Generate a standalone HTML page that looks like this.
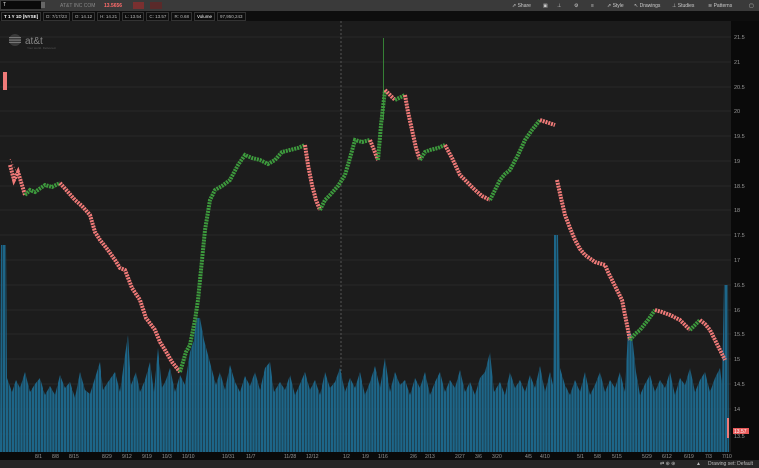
<!DOCTYPE html>
<html><head><meta charset="utf-8"><style>
html,body{margin:0;padding:0;background:#1c1c1c;width:759px;height:468px;overflow:hidden;font-family:"Liberation Sans",sans-serif}
#top{position:absolute;left:0;top:0;width:759px;height:11px;background:#3a3a3a;font-size:5px;color:#ccc}
#info{position:absolute;left:0;top:11px;width:759px;height:10px;background:#0e0e0e;font-size:4.5px;color:#bbb;display:flex;align-items:center;gap:2px;padding-left:1px;box-sizing:border-box}
.b{height:7px;line-height:7px;border:1px solid #333;padding:0 2px;white-space:nowrap}
.t{position:absolute;top:3px;white-space:nowrap;line-height:6px}
#axis{position:absolute;left:731px;top:21px;width:28px;height:439px;background:#0a0a0a}
#xaxis{position:absolute;left:0;top:452px;width:731px;height:8px;background:#0a0a0a}
#bot{position:absolute;left:0;top:460px;width:759px;height:8px;background:#262626;font-size:5px;color:#bbb}
svg{position:absolute;left:0;top:0}
</style></head><body>
<div id="top">
<div style="position:absolute;left:1px;top:1px;width:38px;height:8px;background:#0a0a0a;color:#ddd;font-size:5px;line-height:8px;padding-left:2px">T</div>
<div style="position:absolute;left:41px;top:2px;width:4px;height:6px;background:#666"></div>
<div class="t" style="left:60px;color:#888">AT&amp;T INC COM</div>
<div class="t" style="left:104px;color:#ff6b6b;font-weight:bold">13.5656</div>
<div style="position:absolute;left:133px;top:2px;width:11px;height:7px;background:#7a3030"></div>
<div style="position:absolute;left:150px;top:2px;width:12px;height:7px;background:#5a2a2a"></div>
<div class="t" style="left:512px">⇗ Share</div>
<div class="t" style="left:543px">▣</div>
<div class="t" style="left:557px">⊥</div>
<div class="t" style="left:574px">⚙</div>
<div class="t" style="left:591px">≡</div>
<div class="t" style="left:607px">⇗ Style</div>
<div class="t" style="left:634px">↖ Drawings</div>
<div class="t" style="left:672px">⊥ Studies</div>
<div class="t" style="left:708px">≋ Patterns</div>
<div class="t" style="left:749px">▢</div>
</div>
<div id="info">
<div class="b" style="color:#fff;font-weight:bold">T 1 Y 1D [NYSE]</div>
<div class="b">D: 7/17/23</div>
<div class="b">O: 14.12</div>
<div class="b">H: 14.21</div>
<div class="b">L: 13.54</div>
<div class="b">C: 13.57</div>
<div class="b">R: 0.68</div>
<div class="b" style="color:#fff">Volume</div>
<div class="b">97,950,243</div>
</div>
<div id="axis"></div>
<div id="xaxis"></div>
<div id="bot"><div class="t" style="left:696px;top:1px">▲</div><div class="t" style="left:660px;top:1px">⇄ ⊕ ⊕</div><div class="t" style="left:708px;top:1px">Drawing set: Default</div></div>
<svg width="759" height="468" font-family="Liberation Sans">
<defs>
<pattern id="st" x="0" y="0" width="2.9" height="10" patternUnits="userSpaceOnUse">
<rect x="0" y="0" width="2.4" height="10" fill="#1d6689"/>
</pattern>
</defs>
<g stroke="#272727" stroke-width="1">
<line x1="0" x2="731" y1="37" y2="37"/><line x1="0" x2="731" y1="62" y2="62"/><line x1="0" x2="731" y1="87" y2="87"/><line x1="0" x2="731" y1="111" y2="111"/><line x1="0" x2="731" y1="136" y2="136"/><line x1="0" x2="731" y1="161" y2="161"/><line x1="0" x2="731" y1="186" y2="186"/><line x1="0" x2="731" y1="210" y2="210"/><line x1="0" x2="731" y1="235" y2="235"/><line x1="0" x2="731" y1="260" y2="260"/><line x1="0" x2="731" y1="285" y2="285"/><line x1="0" x2="731" y1="310" y2="310"/><line x1="0" x2="731" y1="334" y2="334"/><line x1="0" x2="731" y1="359" y2="359"/><line x1="0" x2="731" y1="384" y2="384"/><line x1="0" x2="731" y1="409" y2="409"/><line x1="0" x2="731" y1="434" y2="434"/>
</g>
<g fill="#999" font-size="5.5">
<text x="734" y="39">21.5</text><text x="734" y="64">21</text><text x="734" y="89">20.5</text><text x="734" y="113">20</text><text x="734" y="138">19.5</text><text x="734" y="163">19</text><text x="734" y="188">18.5</text><text x="734" y="212">18</text><text x="734" y="237">17.5</text><text x="734" y="262">17</text><text x="734" y="287">16.5</text><text x="734" y="312">16</text><text x="734" y="336">15.5</text><text x="734" y="361">15</text><text x="734" y="386">14.5</text><text x="734" y="411">14</text><text x="734" y="438">13.5</text>
</g>
<line x1="341" x2="341" y1="21" y2="452" stroke="#555" stroke-dasharray="2,2"/>
<g fill="#999" font-size="5">
<text x="35" y="458">8/1</text><text x="52" y="458">8/8</text><text x="69" y="458">8/15</text><text x="102" y="458">8/29</text><text x="122" y="458">9/12</text><text x="142" y="458">9/19</text><text x="162" y="458">10/3</text><text x="182" y="458">10/10</text><text x="222" y="458">10/31</text><text x="246" y="458">11/7</text><text x="284" y="458">11/28</text><text x="306" y="458">12/12</text><text x="343" y="458">1/2</text><text x="362" y="458">1/9</text><text x="378" y="458">1/16</text><text x="410" y="458">2/6</text><text x="425" y="458">2/13</text><text x="455" y="458">2/27</text><text x="475" y="458">3/6</text><text x="492" y="458">3/20</text><text x="525" y="458">4/5</text><text x="540" y="458">4/10</text><text x="577" y="458">5/1</text><text x="594" y="458">5/8</text><text x="612" y="458">5/15</text><text x="642" y="458">5/29</text><text x="662" y="458">6/12</text><text x="684" y="458">6/19</text><text x="705" y="458">7/3</text><text x="722" y="458">7/10</text>
</g>
<g fill="#777"><circle cx="15" cy="40" r="6" fill="#3a3a3a"/><rect x="9" y="37" width="12" height="1"/><rect x="9" y="39.5" width="12" height="1.2"/><rect x="9" y="42" width="12" height="1"/></g>
<text x="25" y="44" fill="#888" font-size="10">at&amp;t</text><text x="27" y="49" fill="#555" font-size="3">Your world. Delivered.</text>
<polygon fill="url(#st)" points="0,452 1,245 6,245 7,378 12,392 16,380 20,388 25,372 30,392 35,384 40,378 45,395 50,386 55,395 60,375 65,388 70,382 75,398 80,372 85,390 90,394 95,378 100,362 103,390 108,382 115,372 120,392 125,355 128,335 131,385 136,372 140,392 145,380 150,362 154,392 158,348 162,388 166,380 170,368 175,392 180,375 185,385 190,352 194,340 196,318 200,318 204,340 208,355 212,370 216,385 220,372 225,390 230,365 235,382 240,392 245,376 250,386 255,372 260,390 265,368 270,362 274,392 280,382 285,390 290,375 295,395 300,384 305,372 310,390 315,380 320,395 325,372 330,388 335,382 340,368 345,392 350,378 355,388 360,372 365,395 370,382 375,366 380,388 385,358 390,392 395,372 400,385 405,380 410,395 415,378 420,388 425,372 430,395 435,382 440,372 445,392 450,380 455,388 460,370 465,392 470,382 475,395 480,378 485,372 490,352 494,392 500,382 505,395 510,372 515,388 520,380 525,392 530,375 535,388 540,366 545,392 550,372 553,385 554,235 558,235 560,368 565,385 570,395 575,380 580,392 585,372 590,395 595,385 600,372 605,392 610,380 615,388 620,372 625,392 628,330 632,335 636,372 640,395 645,384 650,375 655,392 660,380 665,388 670,372 675,395 680,378 685,385 690,368 695,392 700,380 705,372 710,392 715,378 720,368 722,385 724,285 728,285 729,452"/>
<g fill="none" stroke-width="0.8" stroke-dasharray="1 1.9">
<polyline stroke="#f07a78" points="10,159 25,189 M10,171" />
</g>
<g fill="none" stroke-width="4" stroke-dasharray="2 0.9">
<polyline stroke="#f07a78" points="10,165 14,180 18,172 25,195"/>
<polyline stroke="#3d9a3d" points="25,195 30,190 35,192 45,185 52,187 60,183"/>
<polyline stroke="#f07a78" points="60,183 68,192 75,200 82,206 90,215 95,232 100,240 108,250 115,260 120,268 125,270 132,288 140,300 146,318 155,330 160,342 165,350 172,362 180,372"/>
<polyline stroke="#3d9a3d" points="180,372 186,352 190,345 195,320 198,300 202,260 205,230 210,200 215,190 222,186 230,180 238,165 245,155 252,158 260,160 268,164 275,160 282,152 290,150 298,148 305,145"/>
<polyline stroke="#f07a78" points="305,145 308,165 312,185 316,200 320,210"/>
<polyline stroke="#3d9a3d" points="320,210 325,200 330,195 338,186 345,175 350,158 355,140 362,142 370,140"/>
<polyline stroke="#f07a78" points="370,140 378,160"/>
<polyline stroke="#3d9a3d" points="378,160 381,125 385,90"/>
<polyline stroke="#f07a78" points="385,90 395,100"/>
<polyline stroke="#3d9a3d" points="395,100 405,95"/>
<polyline stroke="#f07a78" points="405,95 408,112 412,130 416,148 420,160"/>
<polyline stroke="#3d9a3d" points="420,160 425,152 430,150 438,148 445,145"/>
<polyline stroke="#f07a78" points="445,145 452,158 460,175 468,183 475,190 482,196 490,200"/>
<polyline stroke="#3d9a3d" points="490,200 495,190 500,180 505,174 510,170 518,155 525,140 532,130 540,120"/>
<polyline stroke="#f07a78" points="540,120 555,125"/>
<polyline stroke="#f07a78" points="557,180 561,198 565,215 570,228 575,240 580,249 585,255 595,262 605,265 608,272 612,280 617,290 622,300 626,320 630,340"/>
<polyline stroke="#3d9a3d" points="630,340 635,334 640,330 648,320 655,310"/>
<polyline stroke="#f07a78" points="655,310 662,312 670,315 680,320 690,330"/>
<polyline stroke="#3d9a3d" points="690,330 700,320"/>
<polyline stroke="#f07a78" points="700,320 705,324 710,330 715,340 720,350 725,360"/>
</g>
<rect x="3" y="72" width="4" height="18" fill="#f07a78"/>
<rect x="727" y="418" width="2" height="20" fill="#f07a78"/>
<line x1="383.5" x2="383.5" y1="38" y2="120" stroke="#3d9a3d" stroke-width="0.8"/>
<rect x="733" y="428" width="16" height="6" fill="#e85a5a"/><text x="734" y="433" fill="#fff" font-size="5">13.57</text>
</svg>
</body></html>
